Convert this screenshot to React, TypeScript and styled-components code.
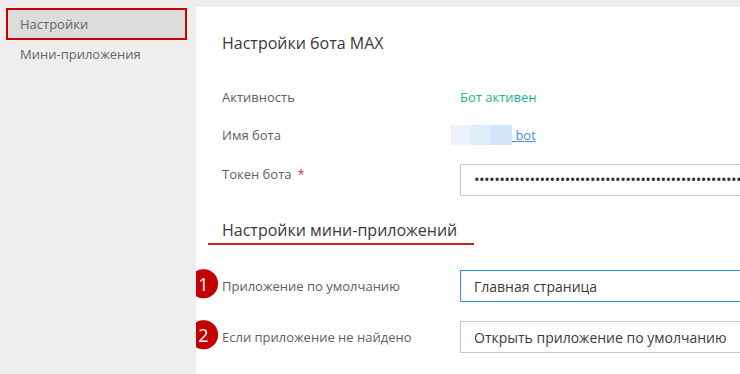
import styled, { createGlobalStyle } from "styled-components";

const GlobalStyle = createGlobalStyle`
  html, body {
    margin: 0;
    padding: 0;
    background: #eeeeee;
    font-family: "Open Sans", "Liberation Sans", sans-serif;
  }
`;

const Page = styled.div`
  display: flex;
  width: 740px;
  height: 374px;
  overflow: hidden;
  background: #eeeeee;
`;

const SideNav = styled.nav`
  width: 196px;
  flex-shrink: 0;
  padding-top: 8px;
  display: flex;
  flex-direction: column;
`;

const NavItem = styled.div<{ $active?: boolean }>`
  box-sizing: border-box;
  height: ${(p) => (p.$active ? "32px" : "28px")};
  margin: 0 9px 0 6px;
  padding-left: ${(p) => (p.$active ? "12px" : "14px")};
  display: flex;
  align-items: center;
  font-size: 13px;
  color: #666666;
  background: ${(p) => (p.$active ? "#dcdcdc" : "transparent")};
  border: ${(p) => (p.$active ? "2px solid #cc0000" : "none")};
`;

const Main = styled.main`
  flex: 1;
  min-width: 0;
  margin-top: 7px;
  background: #ffffff;
  padding: 26px 0 0 26px;
  overflow: hidden;
`;

const Title = styled.h1`
  margin: 0 0 25px;
  font-size: 16px;
  line-height: 20px;
  font-weight: 400;
  color: #3a3a3a;
`;

const Row = styled.div<{ $top?: boolean; $h?: number }>`
  display: flex;
  align-items: ${(p) => (p.$top ? "flex-start" : "center")};
  height: ${(p) => (p.$h ? `${p.$h}px` : "auto")};
`;

const Label = styled.div<{ $pad?: number }>`
  position: relative;
  width: 238px;
  flex-shrink: 0;
  font-size: 13px;
  line-height: 18px;
  color: #606060;
  padding-top: ${(p) => p.$pad ?? 0}px;
`;

const Star = styled.span`
  color: #e03030;
  margin-left: 6px;
`;

const Active = styled.span`
  font-size: 13px;
  color: #1ab391;
`;

const NameValue = styled.div`
  display: flex;
  align-items: center;
  margin-left: -9px;
  font-size: 13px;
`;

const Blur = styled.span<{ $c: string; $w: number }>`
  display: inline-block;
  width: ${(p) => p.$w}px;
  height: 20px;
  background: ${(p) => p.$c};
`;

const BotLink = styled.a`
  color: #4a8fdc;
  text-decoration: underline;
  white-space: pre;
`;

const Field = styled.div<{ $focus?: boolean }>`
  box-sizing: border-box;
  flex-shrink: 0;
  width: 420px;
  height: 32px;
  border: 1px solid ${(p) => (p.$focus ? "#2b94e8" : "#c8c8c8")};
  padding-left: 13px;
  display: flex;
  align-items: center;
  font-size: 14px;
  color: #3a3a3a;
  white-space: nowrap;
  overflow: hidden;
`;

const Dots = styled.span`
  font-size: 15px;
  letter-spacing: -0.6px;
  color: #2f2f3a;
  position: relative;
  top: -1px;
`;

const SectionTitle = styled.h2`
  margin: 24px 0 25px -14px;
  width: 252px;
  padding: 0 0 3px 14px;
  font-size: 16px;
  line-height: 20px;
  font-weight: 400;
  color: #3a3a3a;
  border-bottom: 2px solid #d42020;
`;

const Badge = styled.span`
  position: absolute;
  left: -33px;
  top: 50%;
  transform: translateY(-58%);
  width: 29px;
  height: 29px;
  border-radius: 50%;
  background: #c40000;
  box-shadow: 0 0 1px rgba(0, 0, 0, 0.4);
  color: #ffffff;
  font-size: 18px;
  display: flex;
  align-items: center;
  justify-content: center;
`;

const Spacer = styled.div<{ $h: number }>`
  height: ${(p) => p.$h}px;
`;

export default function App() {
  return (
    <>
      <GlobalStyle />
      <Page>
        <SideNav>
          <NavItem $active>Настройки</NavItem>
          <NavItem>Мини-приложения</NavItem>
        </SideNav>
        <Main>
          <Title>Настройки бота MAX</Title>
          <Row $h={38}>
            <Label>Активность</Label>
            <Active>Бот активен</Active>
          </Row>
          <Row $h={38}>
            <Label>Имя бота</Label>
            <NameValue>
              <Blur $c="#e9f2fc" $w={20} />
              <Blur $c="#e0edfb" $w={19} />
              <Blur $c="#d3e5f8" $w={22} />
              <BotLink href="#"> bot</BotLink>
            </NameValue>
          </Row>
          <Spacer $h={10} />
          <Row $top>
            <Label $pad={1}>
              Токен бота<Star>*</Star>
            </Label>
            <Field>
              <Dots>{"•".repeat(70)}</Dots>
            </Field>
          </Row>
          <SectionTitle>Настройки мини-приложений</SectionTitle>
          <Row>
            <Label>
              <Badge>1</Badge>
              Приложение по умолчанию
            </Label>
            <Field $focus>Главная страница</Field>
          </Row>
          <Spacer $h={19} />
          <Row>
            <Label>
              <Badge>2</Badge>
              Если приложение не найдено
            </Label>
            <Field>Открыть приложение по умолчанию</Field>
          </Row>
        </Main>
      </Page>
    </>
  );
}
